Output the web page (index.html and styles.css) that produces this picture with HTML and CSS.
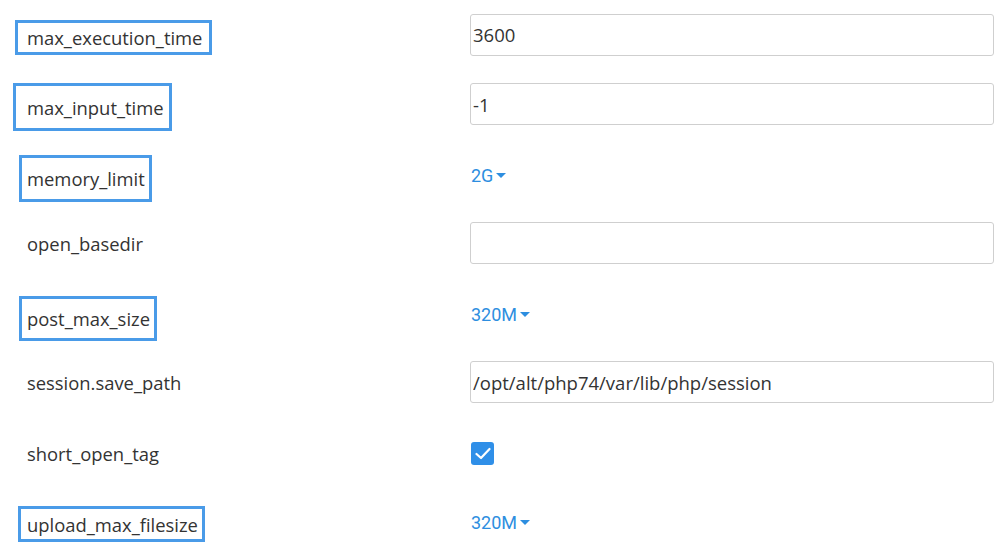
FILE: index.html
```
<!DOCTYPE html>
<html lang="en">

<head>
    <meta charset="UTF-8">
    <meta name="viewport" content="width=device-width, initial-scale=1.0">
    <title>PHP Options</title>
    <link rel="stylesheet" href="styles.css">
</head>

<body>

    <div class="options">
        <div class="row">
            <div class="name"><span class="label marked m1">max_execution_time</span></div>
            <div class="value"><input class="field" type="text" value="3600"></div>
        </div>
        <div class="row">
            <div class="name"><span class="label marked m2">max_input_time</span></div>
            <div class="value"><input class="field" type="text" value="-1"></div>
        </div>
        <div class="row">
            <div class="name"><span class="label marked m3">memory_limit</span></div>
            <div class="value"><span class="dropdown">2G<span class="caret"></span></span></div>
        </div>
        <div class="row">
            <div class="name"><span class="label">open_basedir</span></div>
            <div class="value"><input class="field" type="text" value=""></div>
        </div>
        <div class="row">
            <div class="name"><span class="label marked m4">post_max_size</span></div>
            <div class="value"><span class="dropdown">320M<span class="caret"></span></span></div>
        </div>
        <div class="row">
            <div class="name"><span class="label">session.save_path</span></div>
            <div class="value"><input class="field" type="text" value="/opt/alt/php74/var/lib/php/session"></div>
        </div>
        <div class="row">
            <div class="name"><span class="label shift">short_open_tag</span></div>
            <div class="value">
                <span class="check">
                    <svg width="16" height="13" viewBox="0 0 16 13">
                        <path d="M1.5 7 L6 11 L14.5 2" fill="none" stroke="#fff" stroke-width="2.2" stroke-linecap="round" stroke-linejoin="round" />
                    </svg>
                </span>
            </div>
        </div>
        <div class="row">
            <div class="name"><span class="label marked m5">upload_max_filesize</span></div>
            <div class="value"><span class="dropdown">320M<span class="caret"></span></span></div>
        </div>
    </div>

</body>

</html>
```

FILE: styles.css
```
* {
    margin: 0;
    padding: 0;
    box-sizing: border-box;
}

body {
    background: #fff;
    font-family: "Open Sans", "Noto Sans", sans-serif;
    color: #333;
    overflow: hidden;
}

.options {
    padding: 0 6px 0 0;
}

.row {
    display: grid;
    grid-template-columns: 470px 1fr;
    align-items: center;
    height: 69.5px;
}

.name {
    padding-left: 27px;
}

.label {
    display: inline-block;
    font-size: 18.4px;
    line-height: 25px;
}

.shift {
    margin-top: 4px;
}

.marked {
    border: 3px solid #4a9be8;
}

.m1 {
    padding: 2px 7px 2px 9px;
    margin-left: -12px;
    margin-top: 6px;
}

.m2 {
    padding: 8.5px 5px 8.5px 11px;
    margin-left: -14px;
    margin-top: 6px;
}

.m3 {
    padding: 8px 4px 8px 5px;
    margin-left: -8px;
    margin-top: 10px;
}

.m4 {
    padding: 7px 4px 7px 5px;
    margin-left: -8px;
    margin-top: 12px;
}

.m5 {
    padding: 2.5px 4px 2.5px 6px;
    margin-left: -9px;
    margin-top: 6px;
}

.field {
    display: block;
    width: 100%;
    height: 42px;
    border: 1px solid #cfcfcf;
    border-radius: 3px;
    padding: 0 2px;
    font-family: "Open Sans", "Noto Sans", sans-serif;
    font-size: 18.5px;
    color: #333;
    outline: none;
}

.dropdown {
    display: inline-flex;
    align-items: center;
    margin-left: 1px;
    margin-top: 4px;
    font-family: Roboto, "Liberation Sans", sans-serif;
    font-size: 18px;
    color: #2d8ee0;
    cursor: pointer;
}

.caret {
    width: 0;
    height: 0;
    margin-left: 3px;
    border-left: 5.5px solid transparent;
    border-right: 5.5px solid transparent;
    border-top: 5.5px solid #2d8ee0;
}

.check {
    display: flex;
    justify-content: center;
    align-items: center;
    width: 23px;
    height: 23px;
    margin-left: 1px;
    margin-top: 4px;
    background: #2f8fe8;
    border-radius: 3px;
}
```
